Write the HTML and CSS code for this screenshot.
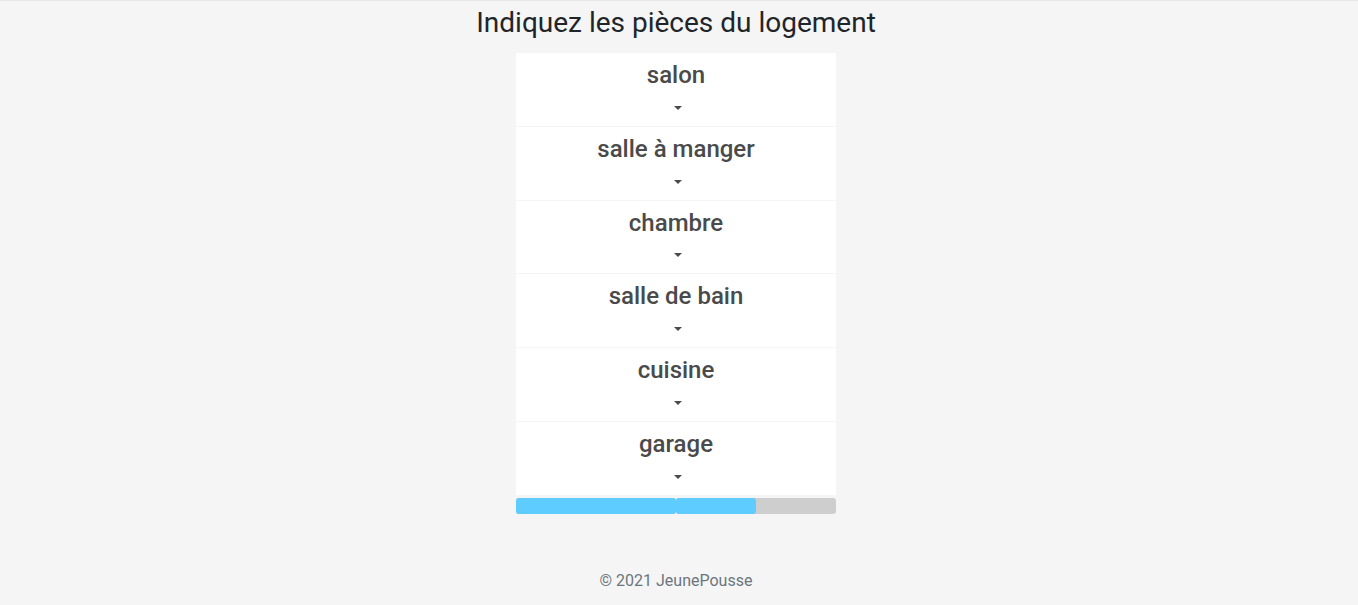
FILE: index.html
```html
<!DOCTYPE html>
<html lang="fr">
<head>
<meta charset="utf-8">
<title>JeunePousse</title>
<link rel="stylesheet" href="styles.css">
</head>
<body>
<main class="page">
  <h1 class="title">Indiquez les pièces du logement</h1>
  <div class="panel">
    <div class="rooms">
      <button class="room" type="button">salon</button>
      <button class="room" type="button">salle à manger</button>
      <button class="room" type="button">chambre</button>
      <button class="room" type="button">salle de bain</button>
      <button class="room" type="button">cuisine</button>
      <button class="room" type="button">garage</button>
    </div>
    <div class="progress">
      <div class="step"><div class="bar" style="width:100%"></div></div>
      <div class="step"><div class="bar" style="width:50%"></div></div>
    </div>
  </div>
</main>
<footer class="footer">© 2021 JeunePousse</footer>
</body>
</html>
```
FILE: styles.css
```css
* {
  box-sizing: border-box;
}

body {
  margin: 0;
  padding-right: 6px;
  border-top: 1px solid #e7e7e7;
  background: #f5f5f5;
  color: #212529;
  font: 16px/24px Roboto, sans-serif;
  text-align: center;
}

.title {
  margin: 5px 0 13px;
  font-size: 28px;
  font-weight: 400;
  line-height: 34px;
}

.panel {
  width: 100%;
  max-width: 320px;
  margin: 0 auto;
}

.rooms {
  display: flex;
  flex-direction: column;
  gap: 1px;
}

.room {
  display: flex;
  flex-direction: column;
  align-items: center;
  gap: 16px;
  padding: 8px 0 16px;
  border: 0;
  background: #fff;
  color: #4a4a4a;
  font: 500 24px/1.2 Roboto, sans-serif;
}

.room::after {
  content: "";
  margin-left: 4px;
  border: 4px solid transparent;
  border-top-color: currentColor;
  border-bottom: 0;
}

.progress {
  display: flex;
  margin-top: 3px;
}

.step {
  flex: 1;
  height: 16px;
  border-radius: 3px;
  background: #cecece;
}

.bar {
  height: 100%;
  border-radius: 3px;
  background: #5eccff;
}

.footer {
  padding: 55px 0 12px;
  color: #6c757d;
}
```
